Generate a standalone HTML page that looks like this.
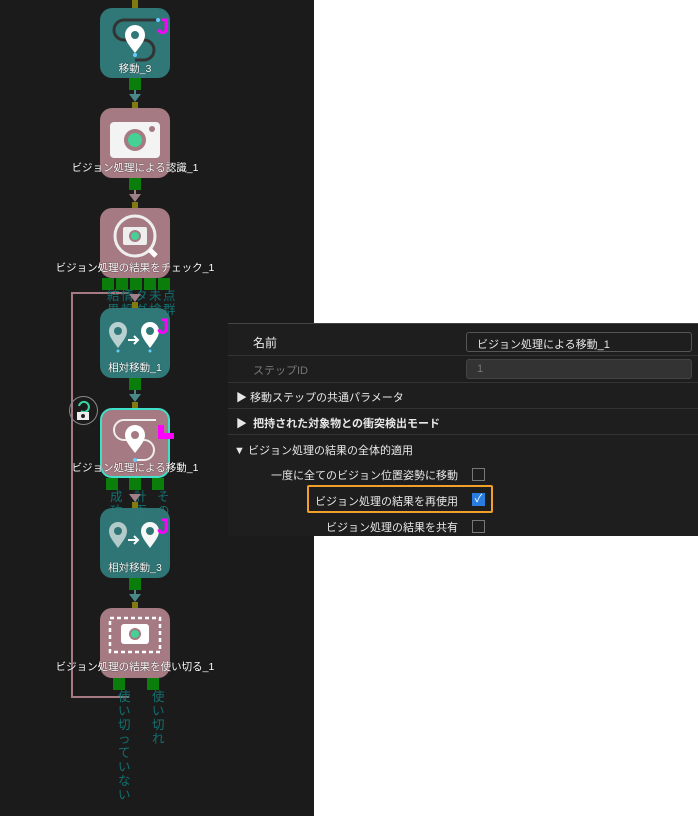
<!DOCTYPE html>
<html><head><meta charset="utf-8"><style>
*{margin:0;padding:0;box-sizing:border-box}
body{width:698px;height:816px;background:#fff;position:relative;overflow:hidden;font-family:"Liberation Sans","Noto Sans CJK JP",sans-serif}
#canvas{position:absolute;left:0;top:0;width:314px;height:816px;background:#1b1b1b}
.n{position:absolute;left:100px;width:70px;height:70px;border-radius:12px}
.t{background:#307878}.p{background:#a57a82}
.lbl{position:absolute;left:0;width:270px;text-align:center;color:#fff;font-size:10.5px;white-space:nowrap;text-shadow:0 0 1px #000}
.port{position:absolute;width:12px;height:12px;background:#0a7d0a}
.tip{position:absolute;width:6px;height:8px;background:#807a10}
.ar{position:absolute;width:0;height:0;border-left:6px solid transparent;border-right:6px solid transparent;border-top:8px solid #4a8888}
.ar.pk{border-top-color:#a08088}
.vl{position:absolute;width:2px}
.out{position:absolute;color:#137070;font-size:12.5px;line-height:14px;width:14px;word-break:break-all}
.J{position:absolute;color:#ff00ff;font-weight:bold;font-size:22px}
#panel{position:absolute;left:228px;top:323px;width:470px;height:213px;background:#1e1e1e;border-top:1px solid #444;color:#e8e8e8;font-size:11px}
.row{position:absolute;left:0;width:470px;border-bottom:1px solid #333}
.cb{position:absolute;width:13px;height:13px;border:1px solid #777;background:#1e1e1e}
.rl{position:absolute;left:0;width:230px;text-align:right;white-space:nowrap}
</style></head><body>
<div id="canvas">
<div class="vl" style="left:134px;top:0;height:8px;background:#4a8888"></div>
<div class="tip" style="left:132px;top:0;height:8px"></div>
<div style="position:absolute;left:71px;top:292px;width:58px;height:406px;border:2px solid #a57a82;border-right:none"></div>
<div style="position:absolute;left:71px;top:696px;width:48px;height:2px;background:#a57a82"></div>

<div class="n t" style="top:8px">
<svg width="70" height="70" viewBox="0 0 70 70"><path d="M24 12 H58 M24 12 a10 10 0 0 0 0 20 H44 a10 10 0 0 1 0 20 H35" stroke="#333" stroke-width="3" fill="none"/><path d="M35 45 C28 36 25 32 25 27 a10 10 0 0 1 20 0 C45 32 42 36 35 45Z" fill="#fff"/><circle cx="35" cy="27" r="4" fill="#307878"/><circle cx="58" cy="12" r="2" fill="#6cf"/><circle cx="35" cy="47" r="2" fill="#6cf"/></svg>
<div class="lbl" style="left:-100px;top:53px">移動_3</div></div>
<div class="J" style="left:157px;top:14px">J</div>
<div class="port" style="left:129px;top:78px"></div>
<div class="vl" style="left:134px;top:90px;height:10px;background:#4a8888"></div>
<div class="ar" style="left:129px;top:94px"></div>
<div class="tip" style="left:132px;top:102px;height:6px"></div>

<div class="n p" style="top:108px">
<svg width="70" height="70" viewBox="0 0 70 70"><rect x="10" y="14" width="50" height="36" rx="4" fill="#f3f3f3"/><circle cx="35" cy="32" r="11" fill="#a57a82"/><circle cx="35" cy="32" r="7" fill="#45d095"/><circle cx="52" cy="21" r="3" fill="#a57a82"/></svg>
<div class="lbl" style="left:-100px;top:52px">ビジョン処理による認識_1</div></div>
<div class="port" style="left:129px;top:178px"></div>
<div class="vl" style="left:134px;top:190px;height:10px;background:#a08088"></div>
<div class="ar pk" style="left:129px;top:194px"></div>
<div class="tip" style="left:132px;top:202px;height:6px"></div>

<div class="n p" style="top:208px">
<svg width="70" height="70" viewBox="0 0 70 70"><circle cx="35" cy="28" r="20" stroke="#eee" stroke-width="3" fill="none"/><rect x="23" y="19" width="24" height="18" rx="2" fill="#eee"/><circle cx="35" cy="28" r="6" fill="#a57a82"/><circle cx="35" cy="28" r="4" fill="#45d095"/><path d="M50 42 l6 6" stroke="#fff" stroke-width="5"/></svg>
<div class="lbl" style="left:-100px;top:52px">ビジョン処理の結果をチェック_1</div></div>
<div class="port" style="left:102px;top:278px"></div><div class="port" style="left:116px;top:278px"></div><div class="port" style="left:130px;top:278px"></div><div class="port" style="left:144px;top:278px"></div><div class="port" style="left:158px;top:278px"></div>
<div class="out" style="left:107px;top:289px">結果</div><div class="out" style="left:121px;top:289px">情報</div><div class="out" style="left:135px;top:289px">タグ</div><div class="out" style="left:149px;top:289px">未検出</div><div class="out" style="left:163px;top:289px">点群</div>
<div class="ar pk" style="left:129px;top:294px"></div>
<div class="tip" style="left:132px;top:302px;height:6px"></div>

<div class="n t" style="top:308px">
<svg width="70" height="70" viewBox="0 0 70 70"><path d="M18 40 C12 32 9 28 9 23 a9 9 0 0 1 18 0 C27 28 24 32 18 40Z" fill="#b8d0d0"/><circle cx="18" cy="23" r="4" fill="#307878"/><path d="M50 40 C44 32 41 28 41 23 a9 9 0 0 1 18 0 C59 28 56 32 50 40Z" fill="#fff"/><circle cx="50" cy="23" r="4" fill="#307878"/><path d="M28 32 H38 M34 28 L38 32 L34 36" stroke="#fff" stroke-width="2" fill="none"/><circle cx="18" cy="43" r="1.5" fill="#6cf"/><circle cx="50" cy="43" r="1.5" fill="#6cf"/></svg>
<div class="lbl" style="left:-100px;top:52px">相対移動_1</div></div>
<div class="J" style="left:157px;top:314px">J</div>
<div class="port" style="left:129px;top:378px"></div>
<div class="vl" style="left:134px;top:390px;height:10px;background:#4a8888"></div>
<div class="ar" style="left:129px;top:394px"></div>
<div class="tip" style="left:132px;top:402px;height:6px"></div>

<div style="position:absolute;left:69px;top:396px;width:29px;height:29px;border:1px solid #888;border-radius:50%"></div>
<svg style="position:absolute;left:69px;top:396px" width="29" height="29"><path d="M10 10 a5 5 0 1 1 2 5" stroke="#3dd4a0" stroke-width="2" fill="none"/><rect x="8" y="16" width="12" height="8" fill="#eee"/><circle cx="14" cy="20" r="2" fill="#222"/></svg>

<div class="n p" style="top:408px;border:2px solid #3ee0c8">
<svg width="66" height="66" viewBox="2 2 66 66"><path d="M24 12 H56 M24 12 a10 10 0 0 0 0 20 H44 a10 10 0 0 1 0 20 H35" stroke="#eee" stroke-width="2" fill="none"/><path d="M35 45 C28 36 25 32 25 27 a10 10 0 0 1 20 0 C45 32 42 36 35 45Z" fill="#fff"/><circle cx="35" cy="27" r="4" fill="#a57a82"/><circle cx="35" cy="52" r="2" fill="#6cf"/></svg>
<div class="lbl" style="left:-102px;top:50px">ビジョン処理による移動_1</div></div>
<div style="position:absolute;left:158px;top:425px;width:6px;height:14px;background:#f0f"></div><div style="position:absolute;left:158px;top:433px;width:16px;height:6px;background:#f0f"></div>
<div class="port" style="left:106px;top:478px"></div><div class="port" style="left:129px;top:478px"></div><div class="port" style="left:152px;top:478px"></div>
<div class="out" style="left:110px;top:490px">成功</div><div class="out" style="left:134px;top:490px">計画失敗</div><div class="out" style="left:157px;top:490px">その他の失敗</div>
<div class="ar pk" style="left:129px;top:494px"></div>
<div class="tip" style="left:132px;top:502px;height:6px"></div>

<div class="n t" style="top:508px;opacity:.97">
<svg width="70" height="70" viewBox="0 0 70 70"><path d="M18 40 C12 32 9 28 9 23 a9 9 0 0 1 18 0 C27 28 24 32 18 40Z" fill="#b8d0d0"/><circle cx="18" cy="23" r="4" fill="#307878"/><path d="M50 40 C44 32 41 28 41 23 a9 9 0 0 1 18 0 C59 28 56 32 50 40Z" fill="#fff"/><circle cx="50" cy="23" r="4" fill="#307878"/><path d="M28 32 H38 M34 28 L38 32 L34 36" stroke="#fff" stroke-width="2" fill="none"/></svg>
<div class="lbl" style="left:-100px;top:52px">相対移動_3</div></div>
<div class="J" style="left:157px;top:514px">J</div>
<div class="port" style="left:129px;top:578px"></div>
<div class="vl" style="left:134px;top:590px;height:10px;background:#4a8888"></div>
<div class="ar" style="left:129px;top:594px"></div>
<div class="tip" style="left:132px;top:602px;height:6px"></div>

<div class="n p" style="top:608px">
<svg width="70" height="70" viewBox="0 0 70 70"><rect x="10" y="10" width="50" height="34" fill="none" stroke="#fff" stroke-width="2.5" stroke-dasharray="4 3"/><rect x="21" y="16" width="28" height="20" rx="3" fill="#fff"/><circle cx="35" cy="26" r="6" fill="#a57a82"/><circle cx="35" cy="26" r="4" fill="#45d095"/></svg>
<div class="lbl" style="left:-100px;top:51px">ビジョン処理の結果を使い切る_1</div></div>
<div class="port" style="left:113px;top:678px"></div><div class="port" style="left:147px;top:678px"></div>
<div class="out" style="left:118px;top:690px">使い切っていない</div><div class="out" style="left:152px;top:690px">使い切れ</div>
</div>

<div id="panel">
<div class="row" style="top:0;height:32px"><span style="position:absolute;left:25px;top:10px;font-size:12px">名前</span>
<div style="position:absolute;left:238px;top:8px;width:226px;height:20px;border:1px solid #555;border-radius:3px;padding:3px 10px">ビジョン処理による移動_1</div></div>
<div class="row" style="top:32px;height:27px;color:#777"><span style="position:absolute;left:25px;top:6px">ステップID</span>
<div style="position:absolute;left:238px;top:3px;width:226px;height:20px;border:1px solid #444;border-radius:3px;background:#333;padding:3px 10px">1</div></div>
<div class="row" style="top:59px;height:26px"><span style="position:absolute;left:8px;top:6px">▶ 移動ステップの共通パラメータ</span></div>
<div class="row" style="top:85px;height:26px"><span style="position:absolute;left:8px;top:6px;font-weight:bold">▶ &nbsp;把持された対象物との衝突検出モード</span></div>
<div style="position:absolute;left:6px;top:118px">▼ ビジョン処理の結果の全体的適用</div>
<div class="rl" style="top:143px">一度に全てのビジョン位置姿勢に移動</div>
<div class="cb" style="left:244px;top:144px"></div>
<div style="position:absolute;left:79px;top:161px;width:186px;height:28px;border:2px solid #f2a02a;border-radius:2px"></div>
<div class="rl" style="top:169px">ビジョン処理の結果を再使用</div>
<div class="cb" style="left:244px;top:169px;background:#2a7de0;border-color:#2a7de0;color:#fff;font-size:11px;line-height:11px;text-align:center">✓</div>
<div class="rl" style="top:195px">ビジョン処理の結果を共有</div>
<div class="cb" style="left:244px;top:196px"></div>
</div>
</body></html>
